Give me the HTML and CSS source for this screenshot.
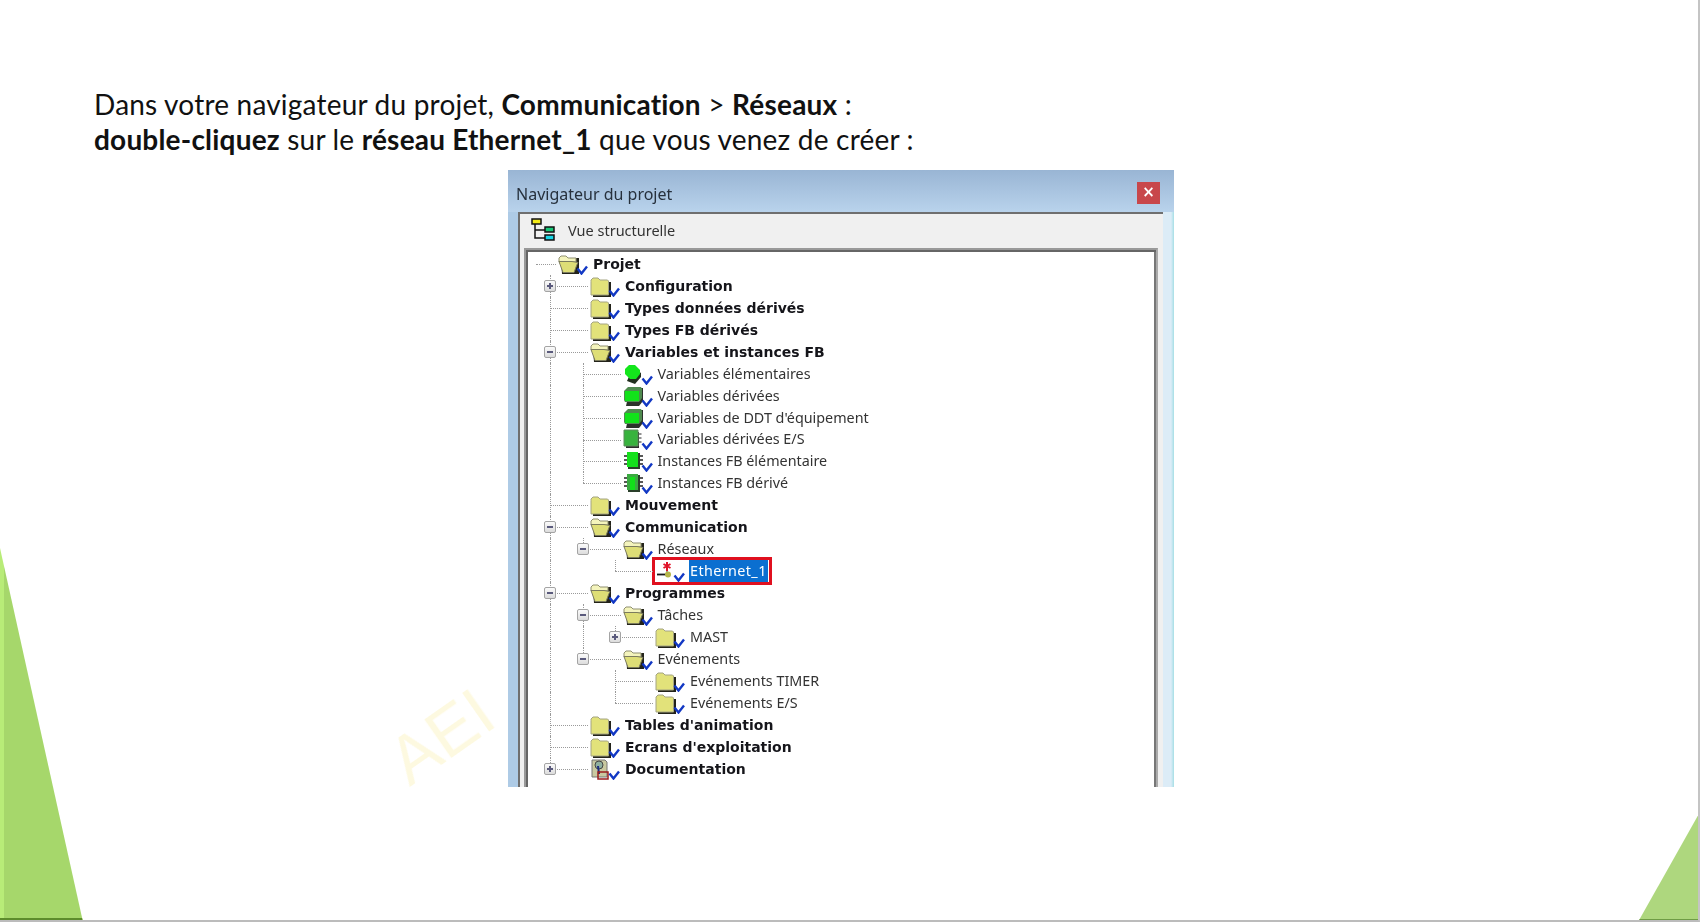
FILE: index.html
```html
<!DOCTYPE html>
<html lang="fr">
<head>
<meta charset="utf-8">
<title>Navigateur du projet</title>
<link rel="stylesheet" href="styles.css">
</head>
<body>
<svg class="defs" width="0" height="0" aria-hidden="true">
  <defs>
    <g id="chk"><path d="M19.500 15.500l4 5 5.500-7" fill="none" stroke="#1238c4" stroke-width="2.400"/></g>
    <symbol id="folder" viewBox="0 0 30 22">
      <path d="M3 7h18v15H3z" fill="#23231a"/>
      <path d="M1 6.500V5l2-2h5l2 2h7.500l1 1v14H1z" fill="#e2e27a" stroke="#a4a482" stroke-width="1"/>
      <use href="#chk"/>
    </symbol>
    <symbol id="open" viewBox="0 0 30 22">
      <path d="M3 5h18v16H4z" fill="#23231a"/>
      <path d="M1 9V5l2-2h5l2 2h8v4z" fill="#f4f4bc" stroke="#8f8f70"/>
      <path d="M1 8.500l13 0 6 1-1 2-3 8H5z" fill="#dede76" stroke="#7c7c5e"/>
      <use href="#chk"/>
    </symbol>
    <symbol id="sphere" viewBox="0 0 30 22">
      <path d="M10 5l8 5v4l-6 7-8-3z" fill="#22301f"/>
      <path d="M6 2h6l5 5v4l-4 5H7l-5-5V6z" fill="#14e61c"/>
      <use href="#chk"/>
    </symbol>
    <symbol id="block" viewBox="0 0 30 22">
      <path d="M7 3h13v13l-4 5H3z" fill="#2b322b"/>
      <path d="M5 2h13l1 2v9l-3 4H2l-1-2V6z" fill="#4f8a4f"/>
      <path d="M2 6h14v10H2z" fill="#12e21a"/>
      <use href="#chk"/>
    </symbol>
    <symbol id="square" viewBox="0 0 30 22">
      <path d="M3 4h13v16H3z" fill="#2e2e2e"/>
      <path d="M16 6h2.500M16 10h2.500M16 14h2.500" stroke="#222"/>
      <path d="M1 2h14v16H1z" fill="#38b33e" stroke="#5c8c5c"/>
      <use href="#chk"/>
    </symbol>
    <symbol id="chip" viewBox="0 0 30 22">
      <path d="M1 6h4M1 10h4M1 14h4M16 6h4M16 10h4M16 14h4" stroke="#222" stroke-width="1.500"/>
      <path d="M5 3h12v16H5z" fill="#2a3f2a"/>
      <path d="M4 2h11v15H4z" fill="#14e01c"/>
      <use href="#chk"/>
    </symbol>
    <symbol id="chip2" viewBox="0 0 30 22">
      <path d="M1 6h4M1 10h4M1 14h4M16 6h4M16 10h4M16 14h4" stroke="#222" stroke-width="1.500"/>
      <path d="M5 3h12v17H5z" fill="#2a3f2a"/>
      <path d="M4 2h11v16H4z" fill="#3aaa40"/>
      <path d="M7 5h5v13H7z" fill="#12e01a"/>
      <use href="#chk"/>
    </symbol>
    <symbol id="net" viewBox="0 0 30 22">
      <path d="M2 14.500h13" stroke="#1a1a1a" stroke-width="1.800"/>
      <path d="M12 10v4" stroke="#777" stroke-width="1.500"/>
      <circle cx="13" cy="14.500" r="3" fill="#b5b548"/>
      <path d="M12 2v9M8.500 4l7 4M15.500 4l-7 4" stroke="#e0142a" stroke-width="2"/>
      <use href="#chk"/>
    </symbol>
    <symbol id="doc" viewBox="0 0 30 22">
      <path d="M2 2h13l2 2v15H2z" fill="#c9c9a0" stroke="#777"/>
      <circle cx="9" cy="7" r="4" fill="#8fb0a0" stroke="#444"/>
      <path d="M8 8l1 8" stroke="#1c2c80" stroke-width="2"/>
      <path d="M8 14h10v7H8z" fill="none" stroke="#9a1d1d" stroke-width="1.500"/>
      <use href="#chk"/>
    </symbol>
  </defs>
</svg>

<main class="slide">
  <div class="wedge wedge-left"></div>
  <div class="wedge wedge-right"></div>
  <div class="watermark">AEI</div>

  <p class="intro">Dans votre navigateur du projet, <b>Communication</b> &gt; <b>Réseaux</b> :<br><b>double-cliquez</b> sur le <b>réseau Ethernet_1</b> que vous venez de créer :</p>

  <section class="window">
    <header class="titlebar">
      <span class="title">Navigateur du projet</span>
      <span class="close">×</span>
    </header>
    <div class="pane">
      <div class="toolbar">
        <svg class="tree-icon" viewBox="0 0 25 24" width="25" height="24">
          <path d="M4 6v14h10M4 12h10" fill="none" stroke="#111" stroke-width="1.500"/>
          <rect x="1" y="1" width="9" height="5" fill="#f5ec18" stroke="#111" stroke-width="1.500"/>
          <rect x="14" y="9" width="9" height="5" fill="#18c878" stroke="#111" stroke-width="1.500"/>
          <rect x="14" y="17" width="9" height="5" fill="#18d8e8" stroke="#111" stroke-width="1.500"/>
        </svg>
        <span>Vue structurelle</span>
      </div>
      <div class="tree">
        <div class="row"><i class="c c0"></i><svg class="ico"><use href="#open"/></svg><b>Projet</b></div>
        <div class="row"><i class="c tee"><u class="exp plus"></u></i><svg class="ico"><use href="#folder"/></svg><b>Configuration</b></div>
        <div class="row"><i class="c tee"></i><svg class="ico"><use href="#folder"/></svg><b>Types données dérivés</b></div>
        <div class="row"><i class="c tee"></i><svg class="ico"><use href="#folder"/></svg><b>Types FB dérivés</b></div>
        <div class="row"><i class="c tee"><u class="exp"></u></i><svg class="ico"><use href="#open"/></svg><b>Variables et instances FB</b></div>
        <div class="row"><i class="g v"></i><i class="c tee"></i><svg class="ico"><use href="#sphere"/></svg><span>Variables élémentaires</span></div>
        <div class="row"><i class="g v"></i><i class="c tee"></i><svg class="ico"><use href="#block"/></svg><span>Variables dérivées</span></div>
        <div class="row"><i class="g v"></i><i class="c tee"></i><svg class="ico"><use href="#block"/></svg><span>Variables de DDT d'équipement</span></div>
        <div class="row"><i class="g v"></i><i class="c tee"></i><svg class="ico"><use href="#square"/></svg><span>Variables dérivées E/S</span></div>
        <div class="row"><i class="g v"></i><i class="c tee"></i><svg class="ico"><use href="#chip"/></svg><span>Instances FB élémentaire</span></div>
        <div class="row"><i class="g v"></i><i class="c ell"></i><svg class="ico"><use href="#chip2"/></svg><span>Instances FB dérivé</span></div>
        <div class="row"><i class="c tee"></i><svg class="ico"><use href="#folder"/></svg><b>Mouvement</b></div>
        <div class="row"><i class="c tee"><u class="exp"></u></i><svg class="ico"><use href="#open"/></svg><b>Communication</b></div>
        <div class="row"><i class="g v"></i><i class="c ell"><u class="exp"></u></i><svg class="ico"><use href="#open"/></svg><span>Réseaux</span></div>
        <div class="row"><i class="g v"></i><i class="g"></i><i class="c ell"></i><div class="hl"><svg class="ico"><use href="#net"/></svg><span class="sel">Ethernet_1</span></div></div>
        <div class="row"><i class="c tee"><u class="exp"></u></i><svg class="ico"><use href="#open"/></svg><b>Programmes</b></div>
        <div class="row"><i class="g v"></i><i class="c tee"><u class="exp"></u></i><svg class="ico"><use href="#open"/></svg><span>Tâches</span></div>
        <div class="row"><i class="g v"></i><i class="g v"></i><i class="c ell"><u class="exp plus"></u></i><svg class="ico"><use href="#folder"/></svg><span>MAST</span></div>
        <div class="row"><i class="g v"></i><i class="c ell"><u class="exp"></u></i><svg class="ico"><use href="#open"/></svg><span>Evénements</span></div>
        <div class="row"><i class="g v"></i><i class="g"></i><i class="c tee"></i><svg class="ico"><use href="#folder"/></svg><span>Evénements TIMER</span></div>
        <div class="row"><i class="g v"></i><i class="g"></i><i class="c ell"></i><svg class="ico"><use href="#folder"/></svg><span>Evénements E/S</span></div>
        <div class="row"><i class="c tee"></i><svg class="ico"><use href="#folder"/></svg><b>Tables d'animation</b></div>
        <div class="row"><i class="c tee"></i><svg class="ico"><use href="#folder"/></svg><b>Ecrans d'exploitation</b></div>
        <div class="row"><i class="c ell"><u class="exp plus"></u></i><svg class="ico"><use href="#doc"/></svg><b>Documentation</b></div>
      </div>
    </div>
  </section>
</main>
</body>
</html>
```

FILE: styles.css
```css
* { box-sizing: border-box; }
html, body { margin: 0; padding: 0; background: #fff; height: 922px; overflow: hidden; }
.defs { position: absolute; }

.slide {
  position: relative;
  width: 1700px;
  height: 922px;
  padding: 87px 0 0 94px;
  overflow: hidden;
  background: #fff;
  border-right: 2px solid #c4c4c4;
  border-bottom: 2px solid #bcbcbc;
  display: flex;
  flex-direction: column;
}

.wedge { position: absolute; bottom: -2px; }
.wedge-left {
  left: 0;
  width: 83px;
  height: 374px;
  clip-path: polygon(0 0, 100% 100%, 0 100%);
  background:
    linear-gradient(to top, #5d8c2c 4px, transparent 4px),
    linear-gradient(to right, #b8ec78 4px, #a6d76b 4px);
}
.wedge-right {
  right: -2px;
  width: 62px;
  height: 110px;
  clip-path: polygon(100% 0, 100% 100%, 0 100%);
  background:
    linear-gradient(to top, #6f9c45 3px, transparent 3px),
    linear-gradient(to left, #7fa35a 2px, #aed77e 2px);
}

.watermark {
  position: absolute;
  left: 386px;
  top: 702px;
  font: 400 68px/1 "Liberation Sans", sans-serif;
  color: #fdf9e0;
  transform: rotate(-35deg);
  filter: blur(.6px);
}

.intro {
  margin: 0;
  font: 400 28px/35px Lato, "Open Sans", sans-serif;
  font-variant-ligatures: none;
  letter-spacing: .2px;
  color: #111;
  position: relative;
}
.intro b { font-weight: 700; }

.window {
  position: relative;
  margin: 13px 0 0 414px;
  width: 666px;
  height: 617px;
  overflow: hidden;
  padding: 0 11px 0 10px;
  background: linear-gradient(to right, #aecbe6 10px, #dcecf7 10px, #dcecf7 663px, #a6dfe6 666px);
  display: flex;
  flex-direction: column;
  filter: blur(.35px);
}

.titlebar {
  flex: none;
  height: 42px;
  margin: 0 -11px 0 -10px;
  padding: 5px 14px 0 8px;
  background: linear-gradient(to bottom, #99b5d4, #b9d3ec);
  display: flex;
  align-items: center;
  justify-content: space-between;
}
.title { font: 400 16px "Noto Sans", sans-serif; color: #26303c; }
.close {
  width: 23px;
  height: 22px;
  margin-top: -2px;
  background: #c8474b;
  color: #fff;
  font: 700 15px/21px "DejaVu Sans", sans-serif;
  text-align: center;
}

.pane {
  flex: 1;
  min-height: 0;
  background: #f0f0f0;
  border-top: 2px solid #6f6f6f;
  border-left: 2px solid #6f6f6f;
  padding: 0 5px 0 4px;
  display: flex;
  flex-direction: column;
}

.toolbar {
  flex: none;
  height: 34px;
  display: flex;
  align-items: center;
  gap: 12px;
  padding: 0 0 2px 7px;
  font: 400 14.500px "Noto Sans", sans-serif;
  color: #333;
}

.tree {
  flex: 1;
  min-height: 0;
  background: #fff;
  border: 2px solid #999;
  border-right-color: #aaa;
  border-bottom: 0;
  box-shadow: inset 2px 2px 0 #666, inset -2px 0 0 #777;
  padding: 3px 0 0 8px;
}

.row {
  display: flex;
  align-items: center;
  height: 21.950px;
  font: 400 14.350px "Noto Sans", sans-serif;
  color: #333;
  white-space: nowrap;
}
.row span { padding-bottom: 1px; }
.row b {
  font: 700 14px "DejaVu Sans", sans-serif;
  color: #15151a;
}

.ico { flex: none; width: 30px; height: 22px; margin-right: 5px; }

.g, .c {
  position: relative;
  flex: none;
  align-self: stretch;
  display: block;
}
.g { width: 32.500px; }
.c { width: 56px; }
.c0 { width: 24px; }

.g.v::before, .tee::after, .ell::after {
  content: "";
  position: absolute;
  left: 16px;
  top: 0;
  bottom: 0;
  border-left: 1px dotted #9a9a9a;
}
.ell::after { bottom: 50%; }

.c::before {
  content: "";
  position: absolute;
  left: 16px;
  right: 2px;
  top: 11px;
  border-top: 1px dotted #9a9a9a;
}
.c0::before { left: 2px; }

.exp {
  position: absolute;
  z-index: 1;
  left: 10px;
  top: 5px;
  width: 12px;
  height: 12px;
  border: 1px solid #a4a4a4;
  border-radius: 2px;
  background: linear-gradient(#fbfbfb, #dcdcdc);
  text-decoration: none;
}
.exp::before, .plus::after {
  content: "";
  position: absolute;
  background: #5a5a7c;
}
.exp::before { left: 2px; right: 2px; top: 4px; height: 2px; }
.plus::after { top: 2px; bottom: 2px; left: 4px; width: 2px; }

.hl {
  display: flex;
  align-items: center;
  height: 22px;
  outline: 3px solid #e0101f;
  outline-offset: 0;
  background: #fff;
  padding-right: 1px;
}
.hl .ico { margin-right: 4px; }
.hl .sel {
  background: #0b6fd0;
  color: #fff;
  line-height: 22px;
  padding: 0 1px;
  letter-spacing: .4px;
}
```
